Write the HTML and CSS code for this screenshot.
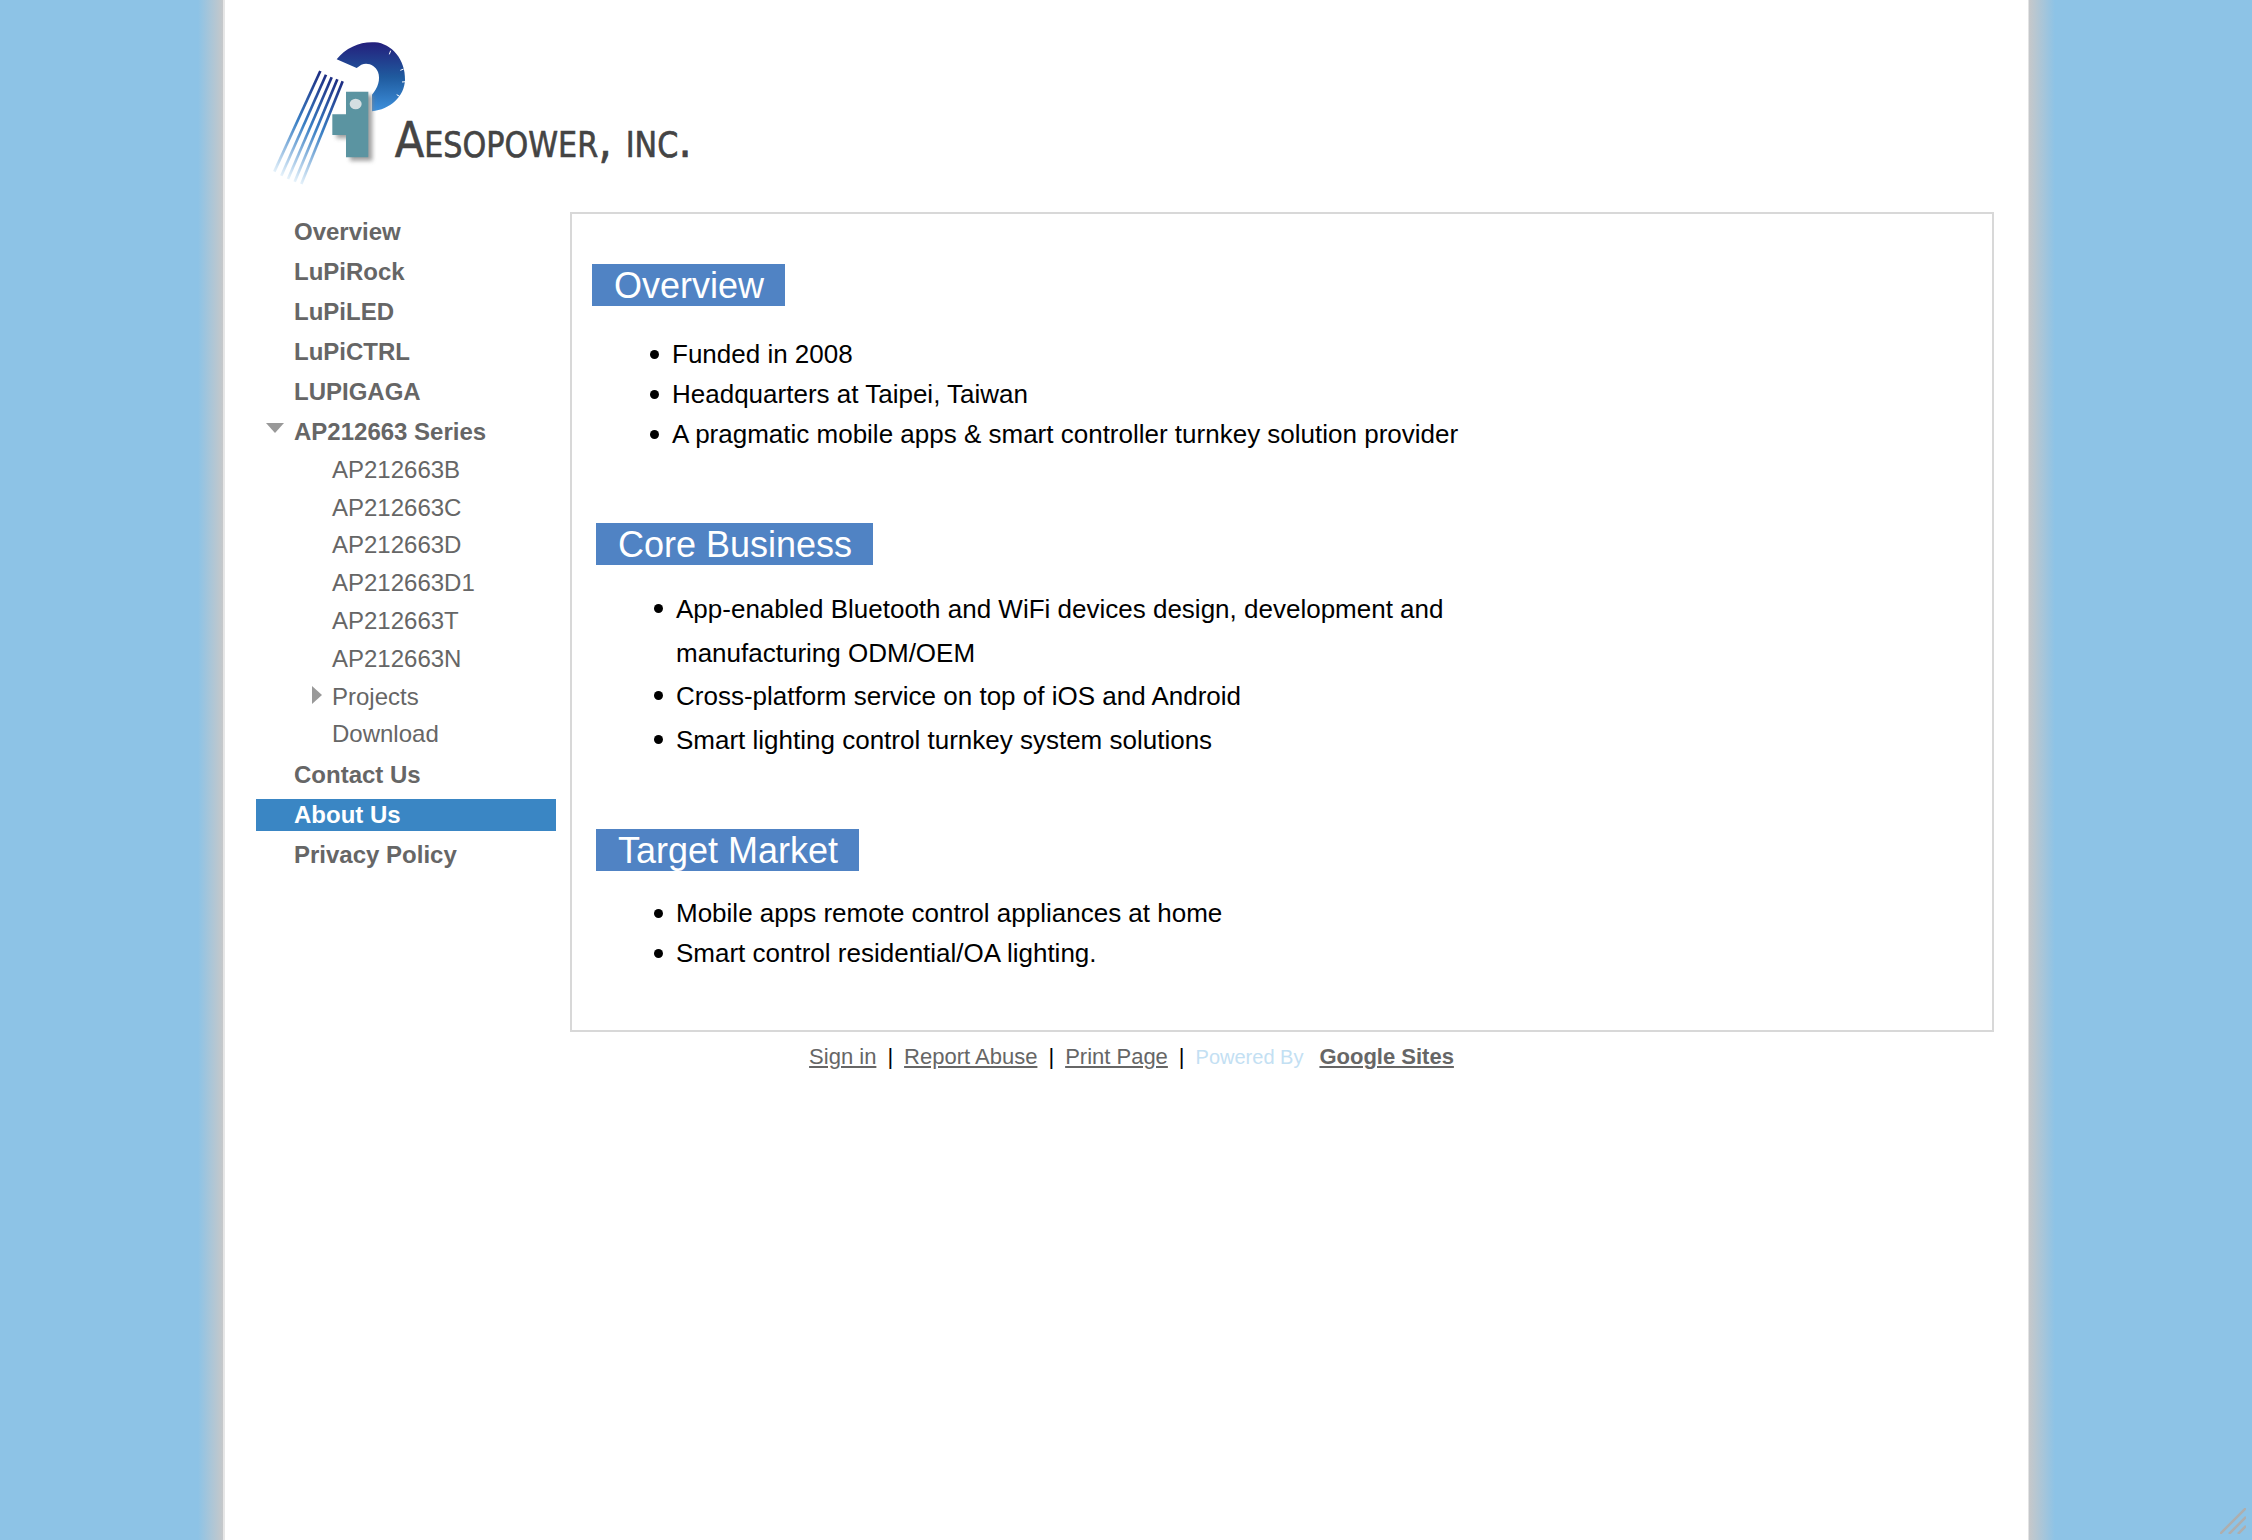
FILE: index.html
```html
<!DOCTYPE html>
<html lang="en">

<head>
    <meta charset="UTF-8">
    <title>Aesopower, Inc.</title>
    <link rel="stylesheet" href="styles.css">
</head>

<body>
    <div id="page">
        <div class="header">
            <svg class="logo" viewBox="0 0 1500 660" width="500" height="220">
                <defs>
                    <linearGradient id="bowl" x1="0" y1="0" x2="0" y2="1">
                        <stop offset="0" stop-color="#241f7c"></stop>
                        <stop offset="0.5" stop-color="#1f5a9e"></stop>
                        <stop offset="1" stop-color="#3d90dc"></stop>
                    </linearGradient>
                    <linearGradient id="ray" gradientUnits="userSpaceOnUse" x1="275" y1="225" x2="135" y2="530">
                        <stop offset="0" stop-color="#1c2a80"></stop>
                        <stop offset="0.5" stop-color="#3a7fc4"></stop>
                        <stop offset="1" stop-color="#e4f1fa"></stop>
                    </linearGradient>
                    <filter id="soft" x="-20%" y="-20%" width="150%" height="150%">
                        <feGaussianBlur stdDeviation="7"></feGaussianBlur>
                    </filter>
                </defs>
                <!-- rays -->
                <g class="rays">
                    <path d="M241 213 L103 515"></path>
                    <path d="M258 224 L124 527"></path>
                    <path d="M275 232 L144 537"></path>
                    <path d="M292 238 L164 545"></path>
                    <path d="M308 244 L184 552"></path>
                </g>
                <!-- gear -->
                <path fill="url(#bowl)" d="M290 178 C318 142 362 124 405 127 C455 130 497 180 495 240 C493 290 450 328 396 334 L396 284 C414 264 422 238 414 216 C406 196 384 186 364 194 L350 204 Z"></path>
                <path class="teeth" d="M452 152 L448 163 M491 207 L481 211 M497 245 L486 246 M479 289 L470 284"></path>
                <!-- plug -->
                <path class="plug-shadow" filter="url(#soft)" d="M330 285 L397 285 L397 482 L330 482 L330 415 L289 415 L289 353 L330 353 Z"></path>
                <path class="plug" d="M318 275 L385 275 L385 472 L318 472 L318 405 L277 405 L277 343 L318 343 Z"></path>
                <ellipse class="plug-hole" cx="347" cy="312" rx="18" ry="16"></ellipse>
                <!-- name -->
                <text class="logo-name" x="464" y="472" textLength="892" lengthAdjust="spacingAndGlyphs">Aesopower, inc.</text>
            </svg>
        </div>

        <div class="columns">
            <ul class="nav">
                <li><a href="#">Overview</a></li>
                <li><a href="#">LuPiRock</a></li>
                <li><a href="#">LuPiLED</a></li>
                <li><a href="#">LuPiCTRL</a></li>
                <li><a href="#">LUPIGAGA</a></li>
                <li>
                    <a href="#"><i class="arrow-down"></i>AP212663 Series</a>
                    <ul class="subnav">
                        <li><a href="#">AP212663B</a></li>
                        <li><a href="#">AP212663C</a></li>
                        <li><a href="#">AP212663D</a></li>
                        <li><a href="#">AP212663D1</a></li>
                        <li><a href="#">AP212663T</a></li>
                        <li><a href="#">AP212663N</a></li>
                        <li><a href="#"><i class="arrow-right"></i>Projects</a></li>
                        <li><a href="#">Download</a></li>
                    </ul>
                </li>
                <li><a href="#">Contact Us</a></li>
                <li class="active"><a href="#">About Us</a></li>
                <li><a href="#">Privacy Policy</a></li>
            </ul>

            <div class="right">
                <div class="content">
                    <div class="section first">
                        <h2>Overview</h2>
                        <ul class="tight">
                            <li>Funded in 2008</li>
                            <li>Headquarters at Taipei, Taiwan</li>
                            <li>A pragmatic mobile apps &amp; smart controller turnkey solution provider</li>
                        </ul>
                    </div>
                    <div class="section second">
                        <h2>Core Business</h2>
                        <ul class="wide">
                            <li>App-enabled Bluetooth and WiFi devices design, development and manufacturing ODM/OEM</li>
                            <li>Cross-platform service on top of iOS and Android</li>
                            <li>Smart lighting control turnkey system solutions</li>
                        </ul>
                    </div>
                    <div class="section third">
                        <h2>Target Market</h2>
                        <ul class="tight">
                            <li>Mobile apps remote control appliances at home</li>
                            <li>Smart control residential/OA lighting.</li>
                        </ul>
                    </div>
                </div>
            </div>
        </div>

        <div class="footer">
            <a href="#">Sign in</a><span class="sep">|</span><a href="#">Report Abuse</a><span class="sep">|</span><a href="#">Print Page</a><span class="sep">|</span><span class="powered">Powered By</span><a href="#" class="brand">Google Sites</a>
        </div>
    </div>

    <svg class="grip" viewBox="0 0 26 26" width="26" height="26">
        <path d="M0 26 L26 0 M9 26 L26 9 M18 26 L26 18"></path>
    </svg>
</body>

</html>
```

FILE: styles.css
```css
* {
    margin: 0;
    padding: 0;
    box-sizing: border-box;
    list-style: none;
}

html,
body {
    height: 100%;
}

body {
    font-family: "Liberation Sans", Arial, sans-serif;
    background: linear-gradient(to right,
            #8dc3e6 198px, #c6c8ca 223px, #e6e6e6 223px, #e6e6e6 225px,
            #fff 225px, #fff 2028px,
            #c6c8ca 2029px, #8dc3e6 2055px);
    overflow: hidden;
}

a {
    color: inherit;
    text-decoration: none;
}

#page {
    width: 1804px;
    margin: 0 auto;
    padding: 0 34px 0 32px;
}

.header {
    height: 212px;
}

.logo {
    display: block;
    margin-left: -16px;
}

.rays path {
    fill: none;
    stroke: url(#ray);
    stroke-width: 8;
}

.teeth {
    fill: none;
    stroke: #fff;
    stroke-width: 3;
}

.plug {
    fill: #5b94a1;
}

.plug-shadow {
    fill: #888;
    opacity: 0.8;
}

.plug-hole {
    fill: #d5dfe2;
}

.logo-name {
    font-size: 150px;
    font-family: "DejaVu Sans", sans-serif;
    font-variant: small-caps;
    fill: #444;
    stroke: #444;
    stroke-width: 2;
}

.columns {
    display: flex;
    gap: 14px;
}

/* sidebar */
.nav {
    width: 300px;
    padding-top: 4px;
    font-size: 24px;
    font-weight: bold;
    color: #666;
}

.nav > li {
    margin-bottom: 8px;
}

.nav > li > a {
    display: flex;
    align-items: center;
    height: 32px;
    padding-left: 38px;
    position: relative;
}

.active > a {
    background: #3a86c4;
    color: #fff;
}

.subnav {
    margin-top: 3px;
    margin-bottom: -2px;
    font-weight: normal;
}

.subnav a {
    display: flex;
    align-items: center;
    height: 37.8px;
    padding-left: 76px;
    position: relative;
}

.arrow-down {
    position: absolute;
    left: 10px;
    top: 7px;
    border-top: 10px solid #999;
    border-left: 9px solid transparent;
    border-right: 9px solid transparent;
}

.arrow-right {
    position: absolute;
    left: 56px;
    top: 8px;
    border-left: 10px solid #999;
    border-top: 9px solid transparent;
    border-bottom: 9px solid transparent;
}

/* main box */
.right {
    width: 1424px;
}

.content {
    height: 820px;
    border: 2px solid #d8d8d8;
    color: #000;
    font-size: 26px;
}

.section h2 {
    display: inline-block;
    height: 42px;
    line-height: 44px;
    padding: 0 21px 0 22px;
    background: #5083c4;
    color: #fff;
    font-size: 36px;
    font-weight: normal;
}

.section li {
    position: relative;
}

.section li::before {
    content: "";
    position: absolute;
    left: -22px;
    top: 16px;
    width: 9px;
    height: 9px;
    border-radius: 50%;
    background: #000;
}

.first {
    padding: 50px 0 0 20px;
}

.second {
    padding: 69px 0 0 24px;
}

.third {
    padding: 67px 0 0 24px;
}

.first ul {
    margin: 28px 0 0 80px;
}

.second ul {
    margin: 23px 0 0 80px;
    max-width: 790px;
}

.third ul {
    margin: 22px 0 0 80px;
}

.tight li {
    line-height: 40px;
}

.wide li {
    line-height: 43.5px;
}

/* footer */
.footer {
    display: flex;
    justify-content: center;
    align-items: center;
    height: 50px;
    padding-left: 13px;
    font-size: 22px;
    color: #666;
}

.footer a {
    text-decoration: underline;
}

.sep {
    margin: 0 11px;
    color: #000;
}

.powered {
    color: #c3e0f3;
    font-size: 20px;
    margin-right: 16px;
}

.brand {
    font-weight: bold;
}

.grip {
    position: fixed;
    right: 6px;
    bottom: 6px;
}

.grip path {
    fill: none;
    stroke: #aeaeae;
    stroke-width: 2.5;
}
```
